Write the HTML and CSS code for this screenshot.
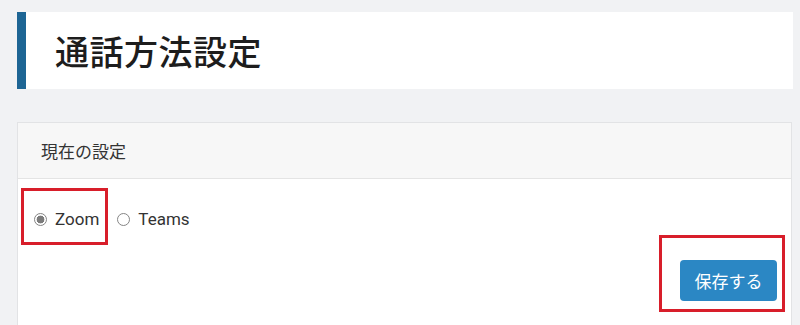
FILE: index.html
```html
<!DOCTYPE html>
<html lang="ja">
<head>
  <meta charset="UTF-8">
  <meta name="viewport" content="width=device-width, initial-scale=1.0">
  <title>通話方法設定</title>
  <link rel="stylesheet" href="styles.css">
</head>
<body>
  <div class="page-title">
    <h1>通話方法設定</h1>
  </div>

  <form class="card" action="#" method="post">
    <div class="card-header">現在の設定</div>
    <div class="card-body">
      <div class="radio-row">
        <label class="radio mark mark-zoom"><input type="radio" name="method" value="zoom" checked>Zoom</label>
        <label class="radio"><input type="radio" name="method" value="teams">Teams</label>
      </div>
      <div class="actions">
        <button type="submit" class="save-btn mark mark-save">保存する</button>
      </div>
    </div>
  </form>
</body>
</html>
```

FILE: styles.css
```css
body {
  margin: 0;
  padding: 12px 7px 0 17px;
  background-color: #f1f2f4;
  font-family: Roboto, "Noto Sans CJK JP", sans-serif;
  color: #333;
}
.page-title {
  display: flex;
  align-items: center;
  height: 77px;
  padding-left: 29px;
  background-color: #fff;
  border-left: 9px solid #1d6594;
}
.page-title h1 {
  margin: 0;
  font-family: "Noto Sans CJK JP", sans-serif;
  font-size: 34px;
  font-weight: 500;
  color: #1d1d1d;
  letter-spacing: 0.5px;
}
.card {
  display: block;
  margin: 33px 1px 0 0;
  background-color: #fff;
  border: 1px solid #e2e3e5;
  border-bottom: none;
  height: 202px;
  overflow: hidden;
}
.card-header {
  display: flex;
  align-items: center;
  height: 55px;
  padding-left: 23px;
  background-color: #f7f7f7;
  border-bottom: 1px solid #e4e4e4;
  font-family: "Noto Sans CJK JP", sans-serif;
  font-size: 17px;
  color: #333;
}
.card-body {
  padding: 30px 14px 0 16px;
}
.radio-row {
  display: flex;
  gap: 18px;
}
.radio {
  display: inline-flex;
  align-items: center;
  gap: 8px;
  height: 20px;
  font-size: 17px;
  color: #333;
  cursor: pointer;
}
.radio input {
  appearance: none;
  width: 13px;
  height: 13px;
  margin: 0;
  border: 1px solid #858585;
  border-radius: 50%;
  background-color: #fff;
}
.radio input:checked {
  background: radial-gradient(circle, #7b7b7b 0 3.6px, #fff 4.2px);
}
.actions {
  display: flex;
  justify-content: flex-end;
  margin-top: 31px;
}
.save-btn {
  width: 97px;
  height: 41px;
  padding: 0;
  background-color: #2b87c4;
  color: #fff;
  border: none;
  border-radius: 4px;
  font-family: "Noto Sans CJK JP", sans-serif;
  font-size: 17px;
  cursor: pointer;
}
/* red annotation boxes */
.mark {
  position: relative;
}
.mark::after {
  content: "";
  position: absolute;
  border: 3px solid #d81e2a;
  pointer-events: none;
}
.mark-zoom::after {
  top: -21px;
  right: -9px;
  bottom: -16px;
  left: -13px;
}
.mark-save::after {
  top: -25px;
  right: -8px;
  bottom: -11px;
  left: -21px;
}
```
